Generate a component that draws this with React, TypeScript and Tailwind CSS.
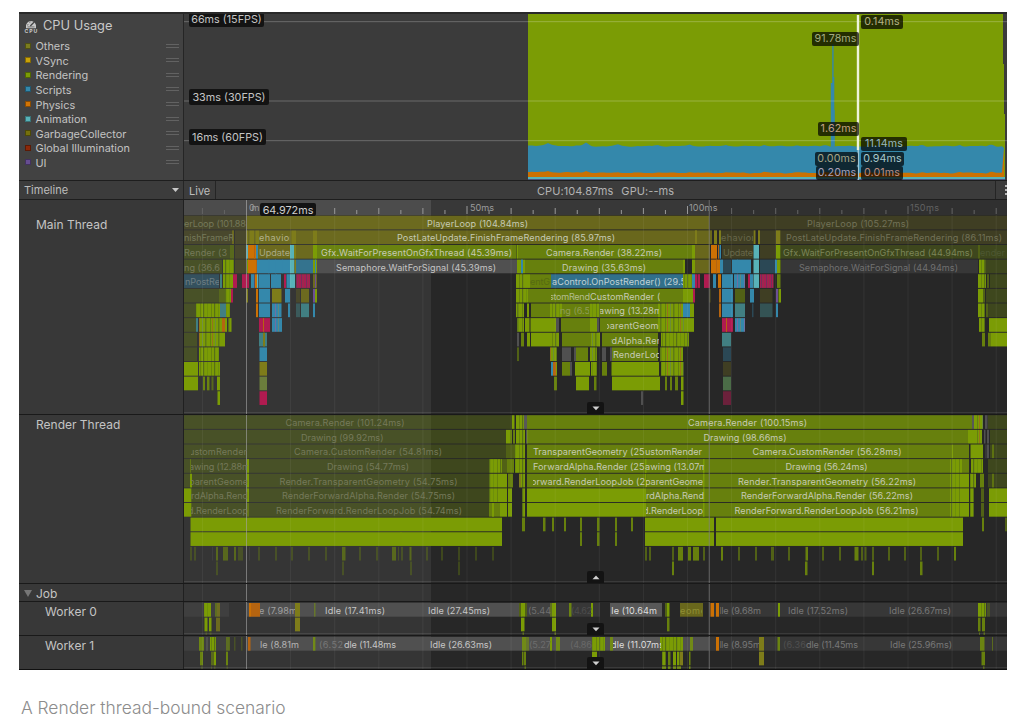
import React from "react";

const FONT = "font-['Inter','Liberation_Sans',sans-serif]";

type Paint = { fill: string; opacity?: number };

const PAINT: Record<string, Paint> = {
  g: { fill: "#7b9c05" },
  m: { fill: "#7b9c05", opacity: 0.76 },
  h: { fill: "#7b9c05", opacity: 0.5 },
  d: { fill: "#7b9c05", opacity: 0.28 },
  O: { fill: "#7e7c1a" },
  o: { fill: "#7c7a1a", opacity: 0.78 },
  q: { fill: "#7c7a1a", opacity: 0.28 },
  b: { fill: "#3488ab" },
  B: { fill: "#3488ab", opacity: 0.76 },
  c: { fill: "#3488ab", opacity: 0.35 },
  r: { fill: "#cc7104" },
  R: { fill: "#b56410" },
  p: { fill: "#b01b50" },
  P: { fill: "#b01b50", opacity: 0.5 },
  y: { fill: "#58b2b8" },
  k: { fill: "#505050" },
  K: { fill: "#505050", opacity: 0.4 },
  w: { fill: "#585858" },
  v: { fill: "#6c4f94" },
  t: { fill: "#417f82" },
  T: { fill: "#417f82", opacity: 0.5 },
  e: { fill: "#6b7d3c" },
  E: { fill: "#4b6c47" },
  s: { fill: "url(#greenStripes)" },
  n: { fill: "url(#mixedStripes)" },
  u: { fill: "url(#blueStripes)" },
  z: { fill: "url(#pinkStripes)" },
  i: { fill: "url(#oliveStripes)" },
};

type Label = [row: number, x: number, width: number, text: string, color: string, clip?: [number, number]];

const BRIGHT = "#c6cab4";
const FAINT = "#75795a";

const MAIN_ROWS = [
  "184 246.5 q,246.5 709 o,709 1007 q",
  "184 232 q,232 234 o,235 246 q,246 259 i,259 290 o,290 296 i,296 313 o,313 317 O,317 709 o,695 697 O,709 712 o,714 717 O,719 721 O,721 753 q,753.5 755.5 O,758 760 O,760 776 q,776 780.5 O,781 1007 q",
  "184 230 d,230 234 h,235 246 q,246 248 y,248 256 r,254 255 R,256 258 b,258 290 o,290 294 y,294 296 O,296 313 o,313 317 g,317 516 m,516.5 518 g,518 692 m,692 695 g,695 710 o,711 717 r,718 719 R,719.5 721 b,722 753 q,753.5 759 y,760 776 q,776 780.5 g,781 978 d,978 980 h,980 1007 d",
  "184 222 d,223 234 s,235 246 q,247 249 g,248 256 r,256 257 R,257 290 b,268 269.5 B,275 276 B,282 283 B,290 294.5 y,294.5 296 O,296 313 B,313 317 g,315 316 b,317 517 k,517 525 g,521 523 b,525 683 m,683 685 g,692 695 g,695 710 o,711 720 r,716 717 R,720 723 b,723 731 c,732 751 b,737 738 B,753.5 759 y,760 775 c,775 777 b,777 780.5 g,781 978 K,979 985.5 s,986 1007 d",
  "184 219 c,220 222 t,223 233 s,233 237 p,242 249 p,247 249 P,251 254.5 u,255 257 r,257 258 y,258.5 270 b,271 281 b,276 277 B,284 286 p,286.5 290 b,290 295 y,296 310 z,313 317 o,315 316 v,516 526 s,526 530 g,530 551 m,551 683 B,683 692 s,692 695 b,695 697 p,697.5 700 p,704 710 p,713 716 u,718 721 r,722 733 b,734 745 u,748 750 p,750 753 b,753.5 759 y,760 773.5 z,777 780.5 m,978 986 s,987 989 h,990 1007 d",
  "184 219 d,219 225 h,225 231 s,231 233 p,246 248 O,256 258 r,259 270 b,272 281.5 O,285 290 b,296 300 q,301 309 o,313 315 v,315 317 g,516 528 s,528 683 m,683 693 g,693 695 p,709 711 q,719 721 R,722 733 b,735 745 h,750 754 b,760 772.5 q,776 778 v,778.5 781 g,978 983 g,983 985 h,986 1007 d",
  "184 196 d,196 220 s,220 226 t,226 230 s,256 258 r,259 270 b,272 281.5 u,288 290 b,296 300 T,301 309 t,313 315 b,516 524 n,527 529 g,531 550 m,550 562 s,562 590 m,590 600 s,600 658 m,658 683 n,683 690 b,690 694 g,719 721 R,722 733 b,735 745 t,752 753.5 c,760 772.5 T,776 778 b,978 985 s,986 988.5 h,989 1007 d",
  "184 196 d,196 198 t,199 222 n,222 225 R,225 227 g,228.5 231.5 s,259 270 p,263 264 R,272 282 u,517 524 n,525 529.5 g,530.5 556 g,556 559 k,561 570 m,570 590 m,590 597 g,597 599 k,600 658 m,658 684 n,684 694 g,722 733 p,726 727 R,735 745 u,979 985 s,989 1007 g",
  "184 197 d,199 220 n,220 225 g,259 267 t,263 265 O,517 519 k,521 524 m,527 530 g,531 550 g,550 559 s,562 591 m,591 600 n,602 658 m,661 689 s,722 731 t,982 985 m,988 991 m,991 1007 g",
  "184 197 d,199 219 s,259.5 267 b,517 519 h,550 557 n,562 571 k,574 576 k,576 588 m,590 597 n,602 606 k,610 612 k,612 658 m,660 683 n,723 731 c",
  "184 198 g,199 220 s,259.5 267 O,551 553 b,553 556 R,556 557 g,562 570 m,570 572 k,575 590 g,591 597 s,602 607 m,611.5 659 g,661 683.5 n,723 731 q",
  "184 198 g,203 205 m,207 209.5 m,211.5 213.5 h,217 220 g,259.5 267 e,554 557 m,576 589 g,594 596.5 m,612 660 g,665 667 m,670 672 m,675 678 m,681 683.5 g,723 731 E",
  "217.5 220 g,259.5 267 p,641 643 k,681 683.5 g,723 731 P",
];

const MAIN_LABELS: Label[] = [
  [0, 184, 62, "erLoop (101.88", FAINT, [184, 247]],
  [0, 427, 101, "PlayerLoop (104.84ms)", BRIGHT],
  [0, 807, 102, "PlayerLoop (105.27ms)", "#727258"],
  [1, 184, 50, "nishFrameR", FAINT, [184, 233]],
  [1, 259, 34, "ehavior", "#b3b38c", [259, 290]],
  [1, 397, 218, "PostLateUpdate.FinishFrameRendering (85.97ms)", BRIGHT],
  [1, 721, 34, "ehavior", "#67674a", [721, 753]],
  [1, 786, 216, "PostLateUpdate.FinishFrameRendering (86.11ms)", "#727258"],
  [2, 184, 43, "Render (3", FAINT, [184, 227]],
  [2, 259, 31, "Update", "#a9a985"],
  [2, 321, 191, "Gfx.WaitForPresentOnGfxThread (45.39ms)", BRIGHT],
  [2, 546, 116, "Camera.Render (38.22ms)", BRIGHT],
  [2, 723, 30, "Update", "#67674a"],
  [2, 783, 190, "Gfx.WaitForPresentOnGfxThread (44.94ms)", "#7b8558"],
  [2, 980, 25, "ender", "#4d5732"],
  [3, 184, 36, "ng (36.6", FAINT, [184, 220]],
  [3, 336, 160, "Semaphore.WaitForSignal (45.39ms)", "#c4c4c4"],
  [3, 562, 84, "Drawing (35.63ms)", BRIGHT],
  [3, 799, 159, "Semaphore.WaitForSignal (44.94ms)", "#707070"],
  [4, 185, 35, "nPostRe", "#6d7d83", [184, 219]],
  [4, 530, 20, "entG", "#566b11"],
  [4, 552, 134, "aControl.OnPostRender() (29.5", "#c0d0d6", [551, 683]],
  [5, 549, 41, "stomRend", "#b4bd8d", [551, 590]],
  [5, 590, 74, "CustomRender (1", BRIGHT, [589, 660]],
  [6, 560, 30, "ng (6.5", "#8f9c56", [560, 589]],
  [6, 599, 63, "awing (13.28m", BRIGHT, [600, 659]],
  [7, 604, 60, "parentGeome", BRIGHT, [607, 659]],
  [8, 608, 54, "rdAlpha.Ren", BRIGHT, [611, 659]],
  [9, 613, 48, "RenderLoo", BRIGHT, [612, 659]],
];

const RENDER_ROWS = [
  "184 512 d,512 514 g,514 515 h,516 524 s,524 527 w,527 972 m,972 974 w,974 983 n,985 987.5 k,988 1007 d",
  "184 506 d,506 510 g,510 512 m,513 515 m,516 525 s,526 528 w,527 968 m,968 976 g,976 982 n,984 985.5 k,987 989 k,990 1007 d",
  "184 506 d,506 515 h,515 525 s,527 531 m,531 952 m,952 953 g,953 969 m,970.5 983 g,985 987 K,987 989 k,990 1007 d,992 994 h",
  "184 489 d,190 191 h,247 249 g,489 502 s,502 507 h,507 514 m,515 525 s,527 950 m,645 646.5 g,703 704.5 g,950 962 s,962 969 m,971 983 s,988 1007 d",
  "184 489 d,190 192 g,247 249 g,489 500 s,500 507 g,508 513 m,519 521 O,521 525 s,527 645 m,645 646.5 g,646.5 950 m,703 704.5 g,950 962 s,962 969 g,970 976 s,980 984 m,988 1007 d,992 994 h",
  "184 191.5 g,192 489 d,247 249 g,489 500 s,500 507 g,508 512 g,522 525 s,527 646 g,646 950 m,703 704.5 g,950 962 s,962 969 g,970 974 s,981 984 h,989 1007 g",
  "184 191.5 g,192 489 d,247 249 h,489 500 m,492 494 g,500 507 g,508 512 g,522 525 s,527 646 g,646 950 m,703 704.5 g,950 962 s,962 969 g,970 974 s,981 984 h,989 1007 g",
  "190.5 502 g,522 525 m,543 545.5 m,552 554 m,564 566 m,580 582 m,597 599.5 m,615 617 m,631 633 m,645 714 g,716 963 g,982 984 m,1005 1007 h",
  "190.5 502 g,400.5 401.5 m,580 582 m,597 599.5 m,615 617 m,645 714 g,716 963 g",
  "190 192 d,194 196 d,212 213 K,216 218 h,223 228 h,234 236 h,238 243 d,249 250 K,258 260 d,275 277 d,291 293 d,308 310 d,325 327 d,342 345.5 h,359 361 d,376 378 d,392 396 h,398 399 d,401 403 d,409.5 411.5 h,426 428 d,441 443 d,458 460 d,475 477 d,492 494 d,645 647 h,649 651 h,672 674 h,678 683 m,688 691 m,693 699 m,703 705 h,721 723 m,738 740 h,755 757 h,771 774 h,788 790 h,805.5 808 m,822 824 h,839 841 h,854.5 858.5 m,861 863 h,864.5 866.5 h,872 874 h,888 890 h,904 906 h,920 922 h,937 939 h,954 956 m",
  "216 218 d,342 344 d,410 412 d,458 460 d,672 674 m,805 807.5 m,872 874 m,920 922.5 m",
];

const RENDER_LABELS: Label[] = [
  [0, 285.5, 119, "Camera.Render (101.24ms)", FAINT],
  [0, 688, 119, "Camera.Render (100.15ms)", BRIGHT],
  [1, 301, 82.5, "Drawing (99.92ms)", FAINT],
  [1, 703.5, 83, "Drawing (98.66ms)", BRIGHT],
  [2, 189, 58, "ustomRender", FAINT, [191, 247]],
  [2, 294, 148, "Camera.CustomRender (54.81ms)", FAINT],
  [2, 533, 111.5, "TransparentGeometry (25", BRIGHT],
  [2, 645, 57, "ustomRender", BRIGHT],
  [2, 752.5, 149, "Camera.CustomRender (56.28ms)", BRIGHT],
  [3, 189, 61, "awing (12.88m", FAINT, [191, 248]],
  [3, 327, 82, "Drawing (54.77ms)", FAINT],
  [3, 533, 111.5, "ForwardAlpha.Render (25", BRIGHT],
  [3, 645, 62, "awing (13.07m", BRIGHT, [645, 704]],
  [3, 785.5, 82, "Drawing (56.24ms)", BRIGHT],
  [4, 189, 59, "parentGeome", FAINT, [191, 248]],
  [4, 279.5, 178, "Render.TransparentGeometry (54.75ms)", FAINT],
  [4, 531, 114, "orward.RenderLoopJob (2", BRIGHT, [533, 645]],
  [4, 645, 58, "parentGeome", BRIGHT, [646, 703]],
  [4, 738, 178, "Render.TransparentGeometry (56.22ms)", BRIGHT],
  [5, 191, 57, "rdAlpha.Rend", FAINT, [191, 248]],
  [5, 282, 173, "RenderForwardAlpha.Render (54.75ms)", FAINT],
  [5, 646, 58, "rdAlpha.Rend", BRIGHT, [646, 704]],
  [5, 741, 172, "RenderForwardAlpha.Render (56.22ms)", BRIGHT],
  [6, 188, 60, "d.RenderLoop", FAINT, [191, 248]],
  [6, 276, 186, "RenderForward.RenderLoopJob (54.74ms)", FAINT],
  [6, 643, 60, "d.RenderLoop", BRIGHT, [646, 703]],
  [6, 734.5, 184, "RenderForward.RenderLoopJob (56.21ms)", BRIGHT],
];

const WORKER0_ROWS = [
  "184 229 K,204 211 s,215 217 h,217 220 o,247 519 k,249 251 r,251 260 R,295 300 O,314 315.5 h,519 522 h,521 525 g,525 527 h,527 600 K,527 552 K,550 552 h,552 556 g,569 571.5 m,591 593 g,610 662 w,665 667 h,667 669.5 g,680 703 o,709 1007 K,710.5 714 r,716 719 r,778 780 g,978 981 g,981 986 s,987 990 d",
  "204.5 207.5 g,209 211.5 g,216 220 o,295 300 O,521 524.5 g,552 556 g,667 669.5 m,978 980.5 m,982 985 m",
  "205.5 207 d,209.5 211.5 d,522.5 524 h,554.5 556 h,979 980 h,983.5 985 h",
];
const WORKER0_LABELS: Label[] = [
  [0, 259, 43, "e (7.98ms", "#a0a0a0", [260, 295]],
  [0, 325, 60, "Idle (17.41ms)", "#c6c6c6"],
  [0, 428, 62, "Idle (27.45ms)", "#c6c6c6"],
  [0, 528, 23, "(5.44", "#707070"],
  [0, 571, 21, "(4.62", "#4c4c4c"],
  [0, 609, 48, "lle (10.64m", "#dedede", [611, 661]],
  [0, 680, 26, "eome", "#8f8f34", [680, 702]],
  [0, 719, 42, "lle (9.68m", "#777777", [720, 762]],
  [0, 788, 60, "Idle (17.52ms)", "#777777"],
  [0, 889, 62, "Idle (26.67ms)", "#777777"],
];
const WORKER1_ROWS = [
  "184 229 K,199 204 m,206 208 k,210 216 s,226 230 h,234 235.5 d,241 242.5 d,247 709 k,248 250.5 R,313 315.5 m,315.5 330 K,522 526 m,526 529 h,550 552 g,556 560 m,560 591 K,592 605 s,610 613 m,613 661 w,660 683 s,690 693 m,709 1007 K,716 719 r,759 764 O,777.5 780 m,980 984.5 m,992 993 h",
  "200 203 m,211 213 h,213.5 216 g,226 228 m,522 523.5 m,524 526 m,592 597 g,662 666 s,668 670.5 m,673 676 g,677 679.5 g,680 683 O,689 690.5 m,759 764 O,981.5 985 m",
  "201 202.5 d,211 212 d,214 215.5 d,226.5 228 d,524.5 526 h,662 666 m,668 670.5 m,673 676 m,677 681 m,689 690.5 m,983 984.5 h",
];
const WORKER1_LABELS: Label[] = [
  [0, 260, 39, "le (8.81m", "#b4b4b4"],
  [0, 319, 24, "(6.52", "#777777"],
  [0, 344, 52, "dle (11.48ms", "#c6c6c6"],
  [0, 430, 62, "Idle (26.63ms)", "#c6c6c6"],
  [0, 529, 22, "(5.27", "#6d6d6d"],
  [0, 570, 22, "(4.86", "#696969"],
  [0, 611, 53, "dle (11.07ms", "#dedede", [613, 661]],
  [0, 719, 42, "lle (8.95m", "#777777", [720, 759]],
  [0, 783, 23, "(6.36", "#505050"],
  [0, 806, 52, "dle (11.45ms", "#777777"],
  [0, 890, 62, "Idle (25.96ms)", "#777777"],
];

const X0 = 184;
const X1 = 1007;
const MS0 = 246.5;
const STEP = 44.1;
const GRID = Array.from({ length: 19 }, (_, i) => MS0 + STEP * (i - 1));

function Patterns() {
  const strip = (id: string, w: number, base: string, bands: [number, number, string][]) => (
    <pattern id={id} width={w} height="20" patternUnits="userSpaceOnUse">
      <rect width={w} height="20" fill={base} />
      {bands.map(([x, bw, c]) => (
        <rect key={x} x={x} width={bw} height="20" fill={c} />
      ))}
    </pattern>
  );
  return (
    <svg width="0" height="0" className="absolute">
      <defs>
        {strip("greenStripes", 11, "#7b9c05", [[2, 1, "#67830d"], [5, 1.2, "#587016"], [9, 1, "#6e900a"]])}
        {strip("mixedStripes", 13, "#7b9c05", [[2, 1, "#647f10"], [4, 1, "#96741a"], [7, 1, "#6c8c38"], [10, 1.5, "#5f7a16"]])}
        {strip("blueStripes", 7, "#3488ab", [[2, 1, "#6f6fa2"], [5, 1, "#5f8880"]])}
        {strip("pinkStripes", 5, "#a81d52", [[1, 1, "#74305a"], [3, 0.7, "#8c3a44"]])}
        {strip("oliveStripes", 6, "#7e7c1a", [[2, 1.5, "#686723"]])}
      </defs>
    </svg>
  );
}

function Backdrop({ top, height }: { top: number; height: number }) {
  return (
    <>
      <rect x={X0} y={top} width={823} height={height} fill="#272727" />
      <rect x={X0} y={top} width={247} height={height} fill="#353535" />
    </>
  );
}

function Guides({ top, height }: { top: number; height: number }) {
  return (
    <>
      {GRID.map((x) => (
        <rect key={x} x={x - 0.5} y={top} width="1" height={height} fill="#fff" opacity="0.06" />
      ))}
      <rect x="246" y={top} width="1" height={height} fill="#a0a0a0" opacity="0.6" />
      <rect x="708.7" y={top} width="1.2" height={height} fill="#808080" opacity="0.6" />
    </>
  );
}

function Track({ top, height, first, rows, labels }: { top: number; height: number; first: number; rows: string[]; labels: Label[] }) {
  const pitch = 14.63;
  return (
    <svg viewBox={`${X0} ${top} ${X1 - X0} ${height}`} width={X1 - X0} height={height} className="block">
      <Backdrop top={top} height={height} />
      {rows.map((row, r) =>
        row.split(",").map((seg, i) => {
          const [a, b, key] = seg.split(" ");
          const p = PAINT[key];
          return (
            <rect key={`${r}-${i}`} x={+a} y={first + r * pitch} width={+b - +a} height={13.7} fill={p.fill} opacity={p.opacity} />
          );
        })
      )}
      <Guides top={top} height={height} />
      {labels.map(([r, x, w, text, color, clip], i) => {
        const id = `clip-${top}-${i}`;
        return (
          <g key={id}>
            {clip && (
              <clipPath id={id}>
                <rect x={clip[0]} y={first + r * pitch} width={clip[1] - clip[0]} height="14" />
              </clipPath>
            )}
            <text
              x={x}
              y={first + r * pitch + 11}
              textLength={w}
              fontSize="9.1"
              fill={color}
              clipPath={clip ? `url(#${id})` : undefined}
              className={FONT}
            >
              {text}
            </text>
          </g>
        );
      })}
      <rect x={X0} y={top + height - 2} width="823" height="1" fill="#fff" opacity="0.09" />
    </svg>
  );
}

function Ruler() {
  const ticks = Array.from({ length: 38 }, (_, i) => ({ x: MS0 + (STEP / 2) * (i - 2), i: i - 2 })).filter((t) => t.x > X0 && t.x < X1);
  const marks: [number, string, number][] = [
    [249, "0m", 10.5],
    [470, "50ms", 24],
    [689, "100ms", 28.5],
    [910, "150ms", 29],
  ];
  return (
    <svg viewBox="184 200 823 15" width={823} height={15} className="block">
      <rect x="184" y="200" width="823" height="15" fill="#303030" />
      <rect x="431" y="200" width="278" height="15" fill="#383838" />
      <rect x="184" y="200" width="247" height="15" fill="#4c4c4c" />
      {ticks.map(({ x, i }) => {
        const h = i % 10 === 0 ? 8 : i % 2 === 0 ? 6 : 4;
        return <rect key={i} x={x - 0.5} y={214 - h} width="1" height={h} fill={x > 246 && x < 709 ? "#999" : "#646464"} />;
      })}
      {marks.map(([x, t, w]) => (
        <text key={t} x={x} y="211" textLength={w} fontSize="9.1" fill={x > 800 ? "#626262" : "#9b9b9b"} className={FONT}>
          {t}
        </text>
      ))}
      <rect x="246" y="200" width="1" height="15" fill="#8a8a8a" />
      <rect x="708.7" y="200" width="1.2" height="15" fill="#606060" />
    </svg>
  );
}

function wave(base: number, peaks: [number, number][], seed: number) {
  let d = "";
  for (let x = 528; x <= 1003; x += 2) {
    let y = base + Math.sin(x * 0.19 + seed) * 0.35 + Math.sin(x * 0.53) * 0.2 - Math.max(0, 600 - x) * 0.012;
    for (const [px, h] of peaks) {
      const dist = Math.abs(x - px);
      if (dist < 5) y -= h * (1 - dist / 5);
    }
    d += `L${x} ${y.toFixed(1)}`;
  }
  return `M528 180${d}L1004 148L1004 180Z`;
}

const PEAKS: [number, number][] = [[548, 2.4], [586, 3.4], [618, 1.8], [657, 1.5], [690, 1.8], [726, 1.6], [764, 1.6], [797, 1.4], [825, 1.4], [922, 1.2], [960, 1.4], [991, 2]];

function UsageChart() {
  return (
    <svg viewBox="184 14 823 166" width={823} height={166} className="block">
      <rect x="184" y="14" width="823" height="166" fill="#3b3b3b" />
      <path d="M528 14H1003V64H1004V114H1005V180H528Z" fill="#7b9c05" />
      <path d={wave(146.2, PEAKS, 1)} fill="#3488ab" />
      <path d="M832.2 44H833.6V77H834.3V110H834.8V147H830.8V83H832.2Z" fill="#3488ab" />
      <path d={wave(172.9, PEAKS.map(([x, h]) => [x, h * 0.6] as [number, number]), 3)} fill="#cb7103" />
      <rect x="528" y="177" width="477" height="2" fill="#58b2b8" />
      <rect x="528" y="179" width="477" height="1" fill="#4b5480" />
      {[21, 100.4, 140].map((y) => (
        <rect key={y} x="184" y={y} width="823" height="1.2" fill="#fff" opacity="0.2" />
      ))}
      <rect x="856.8" y="15" width="2.4" height="135" fill="#eef3dc" />
      <rect x="857.5" y="150" width="1.6" height="30" fill="#9cc6d6" />
    </svg>
  );
}

const BADGES: [string, number, number, number, string][] = [
  ["0.14ms", 861, 14.5, 42, "#b4b183"],
  ["91.78ms", 812, 32, 47, "#a3ab80"],
  ["1.62ms", 818, 122, 41, "#c3a183"],
  ["11.14ms", 861, 137, 46, "#94b7c4"],
  ["0.00ms", 815, 151.5, 43, "#a5a587"],
  ["0.94ms", 861, 151.5, 43, "#a9c9cc"],
  ["0.20ms", 816, 166, 42, "#a9a1bd"],
  ["0.01ms", 861, 166, 42, "#bd8d80"],
];

function ValueBadge({ text, x, y, w, color }: { text: string; x: number; y: number; w: number; color: string }) {
  return (
    <span
      className="absolute flex h-[14px] items-center justify-center overflow-hidden rounded-[2px] bg-black/70 text-[10.7px] leading-[14px] tracking-[0.1px] whitespace-nowrap"
      style={{ left: x - X0, top: y - 14, width: w, color }}
    >
      {text}
    </span>
  );
}

const LEGEND: [string, string][] = [
  ["Others", "#7b7d1e"],
  ["VSync", "#c9a208"],
  ["Rendering", "#7b9c05"],
  ["Scripts", "#3488ab"],
  ["Physics", "#d27405"],
  ["Animation", "#58b2b8"],
  ["GarbageCollector", "#75700c"],
  ["Global Illumination", "#8c2809"],
  ["UI", "#664d91"],
];

function CpuIcon() {
  return (
    <svg width="14" height="15" viewBox="0 0 14 15" className="shrink-0">
      <path d="M2 9.2V8.2A5.1 5.1 0 1 1 12 8.2V9.2Z" fill="#c8c8c8" />
      <path d="M6.3 7L10.2 3" stroke="#424242" strokeWidth="1.2" />
      <path d="M3.6 6.4L4 5.2M5.4 3.4L6.4 3" stroke="#424242" strokeWidth="0.8" />
      <path d="M3.5 7.9H10.5" stroke="#424242" strokeWidth="0.6" />
      <text x="0.4" y="14" fontSize="5.2" fontWeight="700" fill="#c8c8c8" textLength="13" className={FONT}>
        CPU
      </text>
    </svg>
  );
}

function Expander({ up = false, className }: { up?: boolean; className: string }) {
  return (
    <span className={`absolute left-[403px] flex h-[12px] w-[17px] items-center justify-center rounded-t-[2px] bg-[#131313] ${className}`}>
      <svg width="8" height="5" viewBox="0 0 8 5">
        <path d={up ? "M0.5 4.3L4 0.6L7.5 4.3Z" : "M0.5 0.6L4 4.3L7.5 0.6Z"} fill="#d0d0d0" />
      </svg>
    </span>
  );
}

function SideLabel({ children, className }: { children: React.ReactNode; className: string }) {
  return (
    <div className={`w-[165px] shrink-0 border-r border-[#202020] bg-[#383838] text-[12px] leading-[14px] text-[#c4c4c4] ${className}`}>
      {children}
    </div>
  );
}

function FpsTag({ text, className }: { text: string; className: string }) {
  return (
    <span className={`absolute left-[5px] flex items-center justify-center rounded-[2px] bg-[#131313] text-[10.8px] leading-[14px] whitespace-nowrap text-[#c4c4c4] ${className}`}>
      {text}
    </span>
  );
}

export default function App() {
  return (
    <div className={`h-[724px] w-[1025px] overflow-hidden bg-white pt-[12px] pl-[19px] ${FONT}`}>
      <Patterns />
      <div className="flex h-[658px] w-[988px] flex-col overflow-hidden bg-[#1e1e1e]">
        <div className="h-[2px] shrink-0 bg-[#292929]" />
        <div className="flex h-[166px] shrink-0">
          <div className="flex w-[165px] shrink-0 flex-col border-r border-[#252525] bg-[#424242]">
            <div className="flex h-[24.4px] items-center gap-[5px] pl-[5px] text-[12.8px] leading-[16px] text-[#c9c9c9]">
              <CpuIcon />
              <span>CPU Usage</span>
            </div>
            <ul className="flex flex-col">
              {LEGEND.map(([name, color]) => (
                <li key={name} className="flex h-[14.6px] items-center pr-[4px] pl-[6px] text-[10.9px] leading-[14px] text-[#c2c2c2]">
                  <span className="mr-[4.5px] h-[6px] w-[6px] border border-black/35" style={{ backgroundColor: color }} />
                  <span className="pt-px">{name}</span>
                  <span className="ml-auto h-[4px] w-[13px] border-y border-[#626262]" />
                </li>
              ))}
            </ul>
          </div>
          <div className="relative overflow-hidden">
            <UsageChart />
            <FpsTag text="66ms (15FPS)" className="top-[-1px] h-[14px] w-[75px]" />
            <FpsTag text="33ms (30FPS)" className="top-[75px] h-[16px] w-[80px] pt-px" />
            <FpsTag text="16ms (60FPS)" className="top-[115px] h-[16px] w-[77px] pt-px" />
            {BADGES.map(([text, x, y, w, color]) => (
              <ValueBadge key={text} text={text} x={x} y={y} w={w} color={color} />
            ))}
          </div>
        </div>
        <div className="flex h-[20px] shrink-0 border-y border-[#1e1e1e] bg-[#3c3c3c] text-[11px] leading-[20px] text-[#bcbcbc]">
          <div className="flex w-[165px] items-center justify-between border-r border-[#252525] pr-[4px] pl-[5px]">
            <span>Timeline</span>
            <svg width="7" height="4" viewBox="0 0 7 4">
              <path d="M0 0H7L3.5 4Z" fill="#c8c8c8" />
            </svg>
          </div>
          <div className="w-[32px] border-r border-[#252525] pl-[5px]">Live</div>
          <div className="flex flex-1 gap-[8px] pl-[321px] tracking-[0.08px] text-[#b2b2b2]">
            <span>CPU:104.87ms</span>
            <span>GPU:--ms</span>
          </div>
          <div className="flex w-[12px] items-center justify-end overflow-hidden border-l border-[#252525]">
            <svg width="2" height="10" viewBox="0 0 2 10">
              <path d="M0 0H2V2H0ZM0 4H2V6H0ZM0 8H2V10H0Z" fill="#b8b8b8" />
            </svg>
          </div>
        </div>
        <div className="flex h-[215px] shrink-0 border-b border-[#191919]">
          <SideLabel className="pt-[18px] pl-[17px]">Main Thread</SideLabel>
          <div className="relative">
            <Ruler />
            <Track top={215} height={199} first={215.7} rows={MAIN_ROWS} labels={MAIN_LABELS} />
            <span className="absolute top-[3px] left-[76px] flex h-[13px] w-[56px] items-center justify-center rounded-[2px] bg-[#131313] pt-[2px] text-[10.8px] leading-[13px] text-[#d0d0d0]">
              64.972ms
            </span>
            <Expander className="bottom-0" />
          </div>
        </div>
        <div className="flex h-[169px] shrink-0 border-b border-[#191919]">
          <SideLabel className="pt-[3px] pl-[17px]">Render Thread</SideLabel>
          <div className="relative">
            <Track top={415} height={168} first={415.2} rows={RENDER_ROWS} labels={RENDER_LABELS} />
            <Expander up className="bottom-0" />
          </div>
        </div>
        <div className="flex h-[18px] shrink-0 border-b border-[#191919]">
          <SideLabel className="flex items-center gap-[4px] pt-[2px] pl-[5px]">
            <svg width="8" height="8" viewBox="0 0 8 8">
              <path d="M0 0H8L4 7Z" fill="#777" />
            </svg>
            Job
          </SideLabel>
          <svg viewBox="184 584 823 17" width={823} height={17} className="block">
            <Backdrop top={584} height={17} />
            <Guides top={584} height={17} />
          </svg>
        </div>
        <div className="flex h-[34px] shrink-0 border-b border-[#191919]">
          <SideLabel className="pt-[3px] pl-[26px]">Worker 0</SideLabel>
          <div className="relative">
            <Track top={602} height={33} first={603} rows={WORKER0_ROWS} labels={WORKER0_LABELS} />
            <Expander className="bottom-0" />
          </div>
        </div>
        <div className="flex h-[34px] shrink-0 border-b border-[#101010]">
          <SideLabel className="pt-[3px] pl-[26px]">Worker 1</SideLabel>
          <div className="relative">
            <Track top={636} height={33} first={637} rows={WORKER1_ROWS} labels={WORKER1_LABELS} />
            <Expander className="bottom-0" />
          </div>
        </div>
      </div>
      <p className="pt-[26px] pl-[2px] text-[17.4px] leading-[24px] font-light tracking-[-0.01px] text-[#8c8c8c]">A Render thread-bound scenario</p>
    </div>
  );
}
